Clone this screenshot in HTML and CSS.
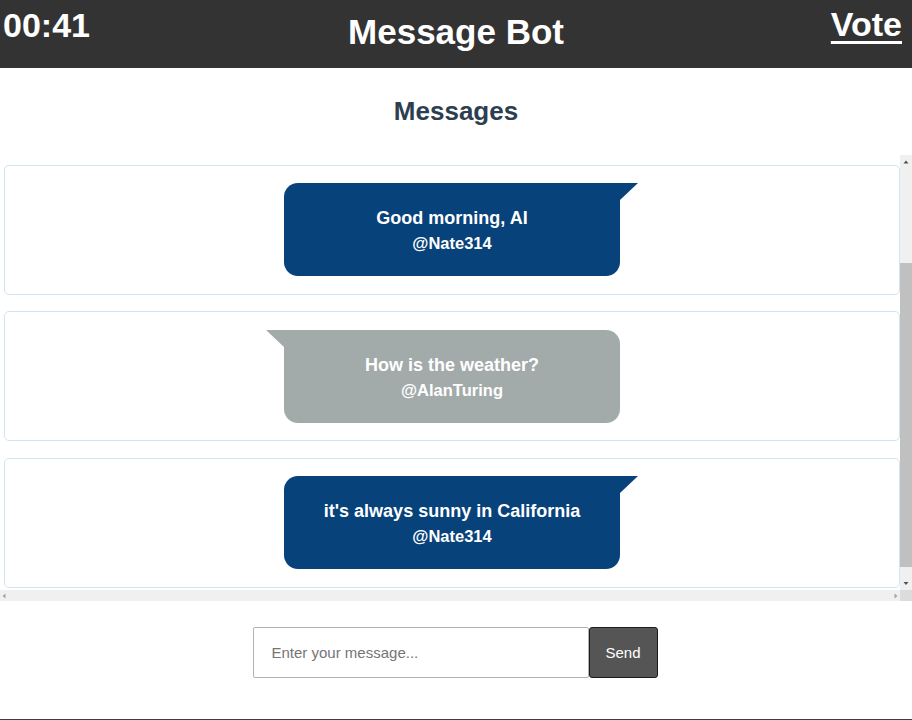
FILE: index.html
```html
<!DOCTYPE html>
<html lang="en">
<head>
<meta charset="utf-8">
<title>Message Bot</title>
<link rel="stylesheet" href="styles.css">
</head>
<body>
<header class="topbar">
  <div class="timer">00:41</div>
  <h1 class="title">Message Bot</h1>
  <a class="vote" href="#">Vote</a>
</header>
<main class="main">
  <h2 class="heading">Messages</h2>
  <div class="scroller">
    <div class="viewport" id="messages">
      <div class="card">
        <div class="bubble bubble-other">
          <div class="text">Hello there</div>
          <div class="author">@AlanTuring</div>
        </div>
      </div>
      <div class="card">
        <div class="bubble bubble-self">
          <div class="text">Good morning, AI</div>
          <div class="author">@Nate314</div>
        </div>
      </div>
      <div class="card">
        <div class="bubble bubble-other">
          <div class="text">How is the weather?</div>
          <div class="author">@AlanTuring</div>
        </div>
      </div>
      <div class="card">
        <div class="bubble bubble-self">
          <div class="text">it's always sunny in California</div>
          <div class="author">@Nate314</div>
        </div>
      </div>
    </div>
    <div class="vbar">
      <div class="sb-btn"><svg width="12" height="12" viewBox="0 0 12 12"><path d="M3.5 8.5 L6 5.5 L8.5 8.5 Z" fill="#505050"/></svg></div>
      <div class="vtrack"><div class="vthumb"></div></div>
      <div class="sb-btn"><svg width="12" height="12" viewBox="0 0 12 12"><path d="M3.5 4 L8.5 4 L6 7 Z" fill="#505050"/></svg></div>
    </div>
    <div class="hbar">
      <div class="sb-btn"><svg width="12" height="12" viewBox="0 0 12 12"><path d="M5.5 3.5 L5.5 8.5 L2.5 6 Z" fill="#a3a3a3"/></svg></div>
      <div class="htrack"></div>
      <div class="sb-btn"><svg width="12" height="12" viewBox="0 0 12 12"><path d="M6.5 3.5 L6.5 8.5 L9.5 6 Z" fill="#a3a3a3"/></svg></div>
    </div>
    <div class="corner"></div>
  </div>
  <form class="composer">
    <input class="composer-input" type="text" placeholder="Enter your message...">
    <button class="composer-send" type="button">Send</button>
  </form>
</main>
<footer class="footer"></footer>
<script src="script.js"></script>
</body>
</html>
```
FILE: styles.css
```css
* { box-sizing: border-box; }
html, body { margin: 0; padding: 0; }
body {
  font-family: "Liberation Sans", Arial, sans-serif;
  background: #ffffff;
  min-height: 100vh;
  display: flex;
  flex-direction: column;
}
.topbar {
  height: 68px;
  background: #333333;
  color: #ffffff;
  display: grid;
  grid-template-columns: 1fr auto 1fr;
  align-items: start;
}
.timer {
  font-size: 34px;
  font-weight: bold;
  line-height: 1;
  padding: 8px 0 0 3px;
}
.title {
  margin: 0;
  font-size: 35px;
  font-weight: bold;
  line-height: 1;
  padding-top: 14px;
}
.vote {
  justify-self: end;
  color: #ffffff;
  font-size: 34px;
  font-weight: bold;
  line-height: 1;
  padding: 7px 10px 0 0;
  text-decoration: underline;
  text-decoration-thickness: 3px;
  text-underline-offset: 5px;
}
.main {
  display: flex;
  flex-direction: column;
  align-items: stretch;
}
.heading {
  margin: 28px 0 29px;
  text-align: center;
  font-size: 26px;
  font-weight: bold;
  color: #2c3e50;
  line-height: 30px;
}
.scroller {
  height: 446px;
  display: grid;
  grid-template-columns: 1fr 12px;
  grid-template-rows: 1fr 11px;
}
.viewport {
  overflow: hidden;
  padding: 1px 0 0 4px;
}
.vbar {
  display: flex;
  flex-direction: column;
  background: #f0f0f0;
}
.sb-btn {
  width: 12px;
  height: 12px;
  flex: none;
  display: flex;
}
.hbar .sb-btn { height: 11px; align-items: center; }
.vtrack {
  flex: 1;
  padding-top: 96px;
}
.vthumb {
  height: 304px;
  background: #c0c0c0;
}
.hbar {
  display: flex;
  background: #f0f0f0;
}
.htrack { flex: 1; }
.corner { background: #dcdcdc; }
.card {
  height: 130px;
  margin-bottom: 16.5px;
  border: 1px solid #cde6ef;
  border-radius: 5px;
  display: flex;
  justify-content: center;
  align-items: center;
}
.bubble {
  position: relative;
  width: 336px;
  height: 93px;
  padding: 25px 20px 0;
  color: #ffffff;
  font-weight: bold;
  text-align: center;
}
.bubble-self {
  background: #08427a;
  border-radius: 14px 0 14px 14px;
}
.bubble-self::after {
  content: "";
  position: absolute;
  top: 0;
  left: 100%;
  width: 0;
  height: 0;
  border-top: 17px solid #08427a;
  border-right: 18px solid transparent;
}
.bubble-other {
  background: #a3abaa;
  border-radius: 0 14px 14px 14px;
}
.bubble-other::after {
  content: "";
  position: absolute;
  top: 0;
  right: 100%;
  width: 0;
  height: 0;
  border-top: 17px solid #a3abaa;
  border-left: 18px solid transparent;
}
.text {
  font-size: 18px;
  line-height: 21px;
}
.author {
  margin-top: 5px;
  font-size: 16.5px;
  line-height: 19px;
}
.composer {
  margin: 26px 0 0;
  padding-right: 2px;
  display: flex;
  justify-content: center;
}
.composer-input {
  width: 336px;
  height: 51px;
  border: 1px solid #b3b3b3;
  border-radius: 2px;
  padding: 0 18px;
  font-family: "Liberation Sans", Arial, sans-serif;
  font-size: 15px;
  color: #333333;
  outline: none;
}
.composer-input::placeholder { color: #757575; }
.composer-send {
  width: 69px;
  height: 51px;
  background: #555555;
  color: #ffffff;
  border: 1px solid #1c1c1c;
  border-radius: 3px;
  font-family: "Liberation Sans", Arial, sans-serif;
  font-size: 15px;
  padding: 0;
}
.footer {
  margin-top: auto;
  height: 1px;
  background: #37404a;
}
```
FILE: script.js
```js
document.getElementById('messages').scrollTop = 138;
```
